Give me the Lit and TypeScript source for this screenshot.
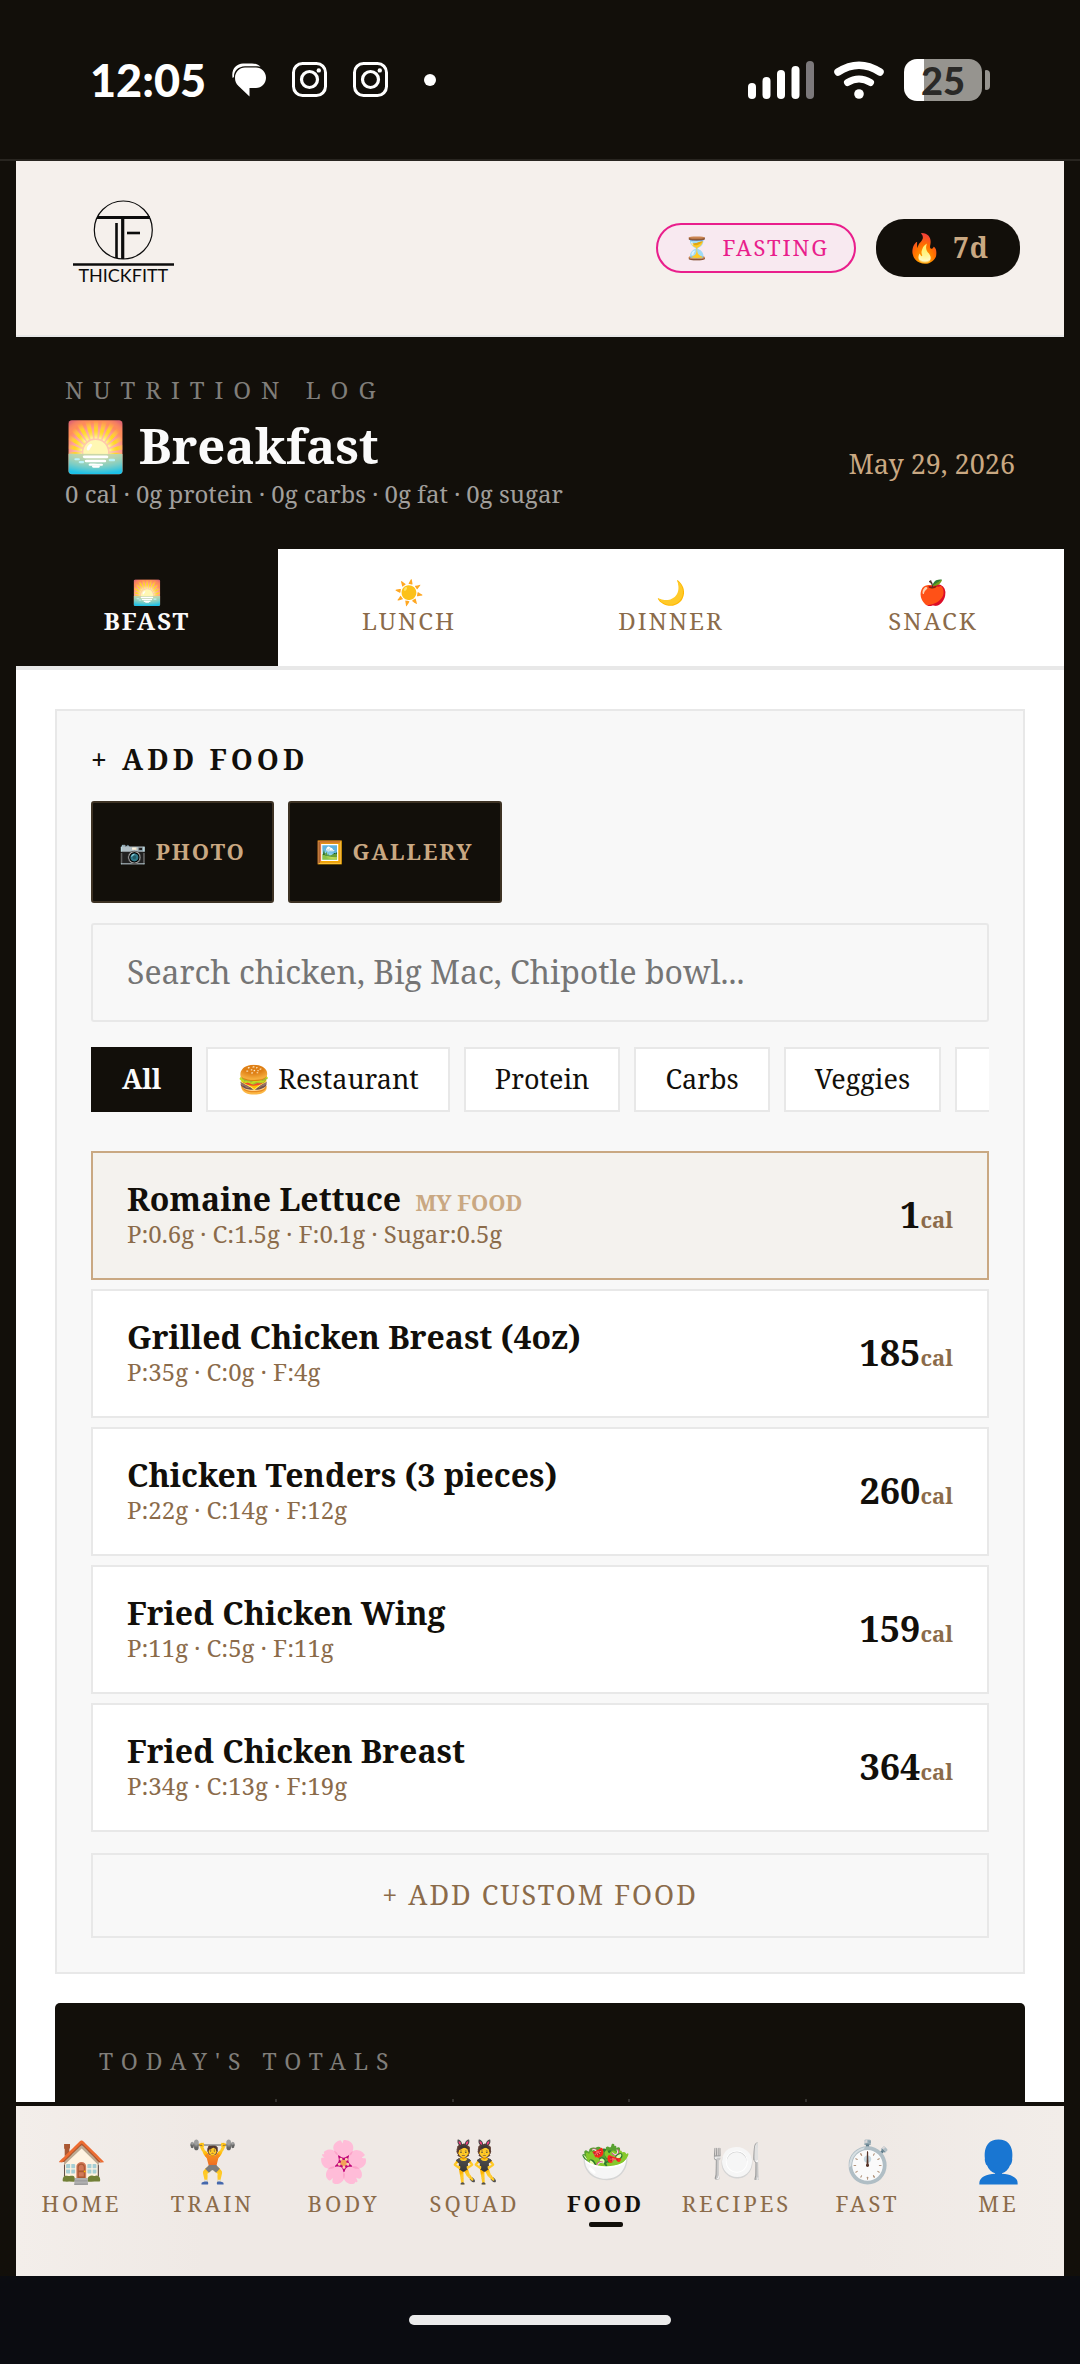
import { LitElement, html, css, nothing } from 'lit';
import { customElement, property, state } from 'lit/decorators.js';
import { classMap } from 'lit/directives/class-map.js';

interface Meal {
    id: string;
    icon: string;
    tab: string;
    title: string;
}

interface Food {
    name: string;
    macros: string;
    calories: number;
    mine?: boolean;
}

interface NavEntry {
    icon: string;
    label: string;
}

const MEALS: Meal[] = [
    { id: 'breakfast', icon: '🌅', tab: 'BFAST', title: 'Breakfast' },
    { id: 'lunch', icon: '☀️', tab: 'LUNCH', title: 'Lunch' },
    { id: 'dinner', icon: '🌙', tab: 'DINNER', title: 'Dinner' },
    { id: 'snack', icon: '🍎', tab: 'SNACK', title: 'Snack' },
];

const FILTERS = ['All', '🍔 Restaurant', 'Protein', 'Carbs', 'Veggies'];

const FOODS: Food[] = [
    { name: 'Romaine Lettuce', macros: 'P:0.6g · C:1.5g · F:0.1g · Sugar:0.5g', calories: 1, mine: true },
    { name: 'Grilled Chicken Breast (4oz)', macros: 'P:35g · C:0g · F:4g', calories: 185 },
    { name: 'Chicken Tenders (3 pieces)', macros: 'P:22g · C:14g · F:12g', calories: 260 },
    { name: 'Fried Chicken Wing', macros: 'P:11g · C:5g · F:11g', calories: 159 },
    { name: 'Fried Chicken Breast', macros: 'P:34g · C:13g · F:19g', calories: 364 },
];

const NAV: NavEntry[] = [
    { icon: '🏠', label: 'HOME' },
    { icon: '🏋️', label: 'TRAIN' },
    { icon: '🌸', label: 'BODY' },
    { icon: '👯', label: 'SQUAD' },
    { icon: '🥗', label: 'FOOD' },
    { icon: '🍽️', label: 'RECIPES' },
    { icon: '⏱️', label: 'FAST' },
    { icon: '👤', label: 'ME' },
];

@customElement('status-bar')
class StatusBar extends LitElement {
    static styles = css`
        :host {
            display: flex;
            align-items: center;
            justify-content: space-between;
            height: 159px;
            padding: 0 90px;
            border-bottom: 2px solid #282520;
            color: #fff;
            font-family: Lato, sans-serif;
            font-weight: 900;
        }

        .side {
            display: flex;
            align-items: center;
        }

        .left {
            gap: 26px;
        }

        .right {
            gap: 20px;
        }

        .time {
            font-size: 45px;
            line-height: 56px;
        }

        svg {
            display: block;
        }

        .dot {
            width: 12px;
            height: 12px;
            margin-left: 10px;
            border-radius: 50%;
            background: #fff;
        }

        .battery {
            display: flex;
            align-items: center;
            gap: 3px;
        }

        .cell {
            width: 78px;
            height: 42px;
            border-radius: 13px;
            background: linear-gradient(to right, #fff 25%, #96948f 25%);
            color: #2a2927;
            font-size: 38px;
            line-height: 42px;
            text-align: center;
        }

        .tip {
            width: 5px;
            height: 20px;
            border-radius: 1px 4px 4px 1px;
            background: #96948f;
        }
    `;

    #camera() {
        return html`<svg width="35" height="35" viewBox="0 0 35 35" fill="none" stroke="#fff" stroke-width="3">
            <rect x="1.5" y="1.5" width="32" height="32" rx="9" />
            <circle cx="17.5" cy="17.5" r="8" stroke-width="3.2" />
            <circle cx="26.8" cy="8.4" r="2.2" fill="#fff" stroke="none" />
        </svg>`;
    }

    render() {
        return html`
            <div class="side left">
                <span class="time">12:05</span>
                <svg width="34" height="34" viewBox="0 0 34 34" fill="#fff">
                    <path d="M0.6 15C-1 6 4 1 11 .4h9c4 0 7 1.6 8.5 3.4C26 3.2 24 3.2 20 3.2h-7C6 3.5 1.6 8 2 14z" />
                    <path d="M13 4.5h11c5.5 0 10 4.5 10 10.2S29.5 25 24 25h-6.500v8.600L6.500 23C4 20.800 3 18 3 14.700 3 9 7.500 4.500 13 4.500z" />
                </svg>
                ${this.#camera()} ${this.#camera()}
                <span class="dot"></span>
            </div>
            <div class="side right">
                <svg width="66" height="38" viewBox="0 0 66 38" fill="#fff">
                    <rect x="0" y="22" width="8" height="16" rx="4" />
                    <rect x="14.5" y="16" width="8" height="22" rx="4" />
                    <rect x="29" y="9" width="8" height="29" rx="4" />
                    <rect x="43.5" y="5" width="8" height="33" rx="4" />
                    <rect x="58" y="0" width="8" height="38" rx="4" fill="#7c797b" />
                </svg>
                <svg width="50" height="38" viewBox="0 0 50 38" fill="none" stroke="#fff" stroke-linecap="round">
                    <path d="M4 11Q25-2.5 46 11" stroke-width="7.5" />
                    <path d="M13.5 21.5Q25 14.5 36.5 21.5" stroke-width="7" />
                    <circle cx="25" cy="33" r="4.8" fill="#fff" stroke="none" />
                </svg>
                <div class="battery">
                    <div class="cell">25</div>
                    <div class="tip"></div>
                </div>
            </div>
        `;
    }
}

@customElement('brand-header')
class BrandHeader extends LitElement {
    static styles = css`
        :host {
            display: flex;
            align-items: center;
            justify-content: space-between;
            padding: 39px 44px 39px 50px;
            border-bottom: 2px solid #e8e8e8;
            background: #f5f0ec;
        }

        .logo {
            display: block;
            font-family: Lato, sans-serif;
            font-size: 18px;
        }

        .pills {
            display: flex;
            align-items: center;
            gap: 20px;
        }

        button {
            display: flex;
            align-items: center;
            font-family: inherit;
            cursor: pointer;
        }

        .fasting {
            gap: 10px;
            height: 50px;
            padding: 0 25px 2px;
            border: 2px solid #e91e8c;
            border-radius: 25px;
            background: #f8e9f0;
            color: #e91e8c;
            font-size: 22px;
            letter-spacing: 2px;
        }

        .streak {
            gap: 10px;
            height: 58px;
            padding: 0 31px 2px;
            border: 0;
            border-radius: 28px;
            background: #120f0a;
            color: #c9a882;
            font-size: 28px;
            font-weight: 700;
            letter-spacing: 1px;
        }
    `;

    render() {
        return html`
            <svg class="logo" width="115" height="96" viewBox="0 0 115 96" role="img" aria-label="Thickfitt">
                <g fill="none" stroke="#0c0c0c">
                    <circle cx="57.3" cy="30" r="29" stroke-width="1.2" />
                    <path d="M31 17.5h53" stroke-width="3" />
                    <path d="M56.7 17v42" stroke-width="3.2" />
                    <path d="M50.5 23v35" stroke-width="2.6" />
                    <path d="M61 33h13" stroke-width="2.6" />
                    <path d="M7 64.5h101" stroke-width="2.4" />
                </g>
                <text x="57.3" y="82" text-anchor="middle" fill="#0c0c0c">THICKFITT</text>
            </svg>
            <div class="pills">
                <button class="fasting"><span>⏳</span><span>FASTING</span></button>
                <button class="streak"><span>🔥</span><span>7d</span></button>
            </div>
        `;
    }
}

@customElement('food-row')
class FoodRow extends LitElement {
    @property({ attribute: false }) food!: Food;

    static styles = css`
        button {
            display: flex;
            align-items: center;
            justify-content: space-between;
            width: 100%;
            padding: 26px 34px 29px;
            border: 2px solid #e8e8e8;
            background: #fff;
            color: #120f0a;
            font-family: inherit;
            text-align: left;
            cursor: pointer;
        }

        .mine {
            border-color: #c9a882;
            background: #f4f2ee;
        }

        .info {
            display: flex;
            flex-direction: column;
        }

        .name {
            font-size: 32px;
            font-weight: 700;
            line-height: 40px;
        }

        .tag {
            margin-left: 6px;
            color: #c9a882;
            font-size: 22px;
            line-height: 22px;
        }

        .macros {
            color: #8b6b4a;
            font-size: 24px;
            line-height: 30px;
        }

        .calories {
            padding-top: 2px;
            font-size: 36px;
            font-weight: 700;
            line-height: 50px;
        }

        .unit {
            color: #8b6b4a;
            font-size: 22px;
            line-height: 22px;
        }
    `;

    render() {
        const { name, macros, calories, mine } = this.food;
        return html`
            <button class=${classMap({ mine: Boolean(mine) })}>
                <span class="info">
                    <span class="name">${name}${mine ? html` <span class="tag">MY FOOD</span>` : nothing}</span>
                    <span class="macros">${macros}</span>
                </span>
                <span class="calories">${calories}<span class="unit">cal</span></span>
            </button>
        `;
    }
}

@customElement('bottom-nav')
class BottomNav extends LitElement {
    @property() current = 'FOOD';

    static styles = css`
        nav {
            display: grid;
            grid-template-columns: repeat(8, 1fr);
            padding: 28px 0 49px;
            border-top: 4px solid #120f0a;
            background: linear-gradient(to right, #f3eeea, #efe9e5 18%, #efe9e5 80%, #f2ede9);
        }

        a {
            display: flex;
            flex-direction: column;
            align-items: center;
            color: #8b6b4a;
            font-size: 22px;
            line-height: 28px;
            letter-spacing: 3px;
            text-decoration: none;
        }

        .icon {
            margin-bottom: 3px;
            font-size: 41px;
            line-height: 52px;
            letter-spacing: 0;
        }

        a::after {
            content: '';
            width: 34px;
            height: 5px;
            margin-top: 5px;
            border-radius: 2px;
        }

        .active {
            color: #120f0a;
            font-weight: 700;
        }

        .active::after {
            background: #120f0a;
        }
    `;

    render() {
        return html`
            <nav>
                ${NAV.map(
                    ({ icon, label }) => html`
                        <a href="#${label.toLowerCase()}" class=${classMap({ active: label === this.current })}>
                            <span class="icon">${icon}</span>
                            <span>${label}</span>
                        </a>
                    `,
                )}
            </nav>
        `;
    }
}

@customElement('app-root')
class AppRoot extends LitElement {
    @state() meal = MEALS[0];
    @state() filter = 'All';

    static styles = css`
        :host {
            display: flex;
            flex-direction: column;
            height: 100vh;
            background: #120f0a;
            color: #120f0a;
            font-family: 'Noto Serif', 'Droid Serif', 'Liberation Serif', serif;
        }

        button,
        input {
            font-family: inherit;
        }

        button {
            cursor: pointer;
        }

        h1,
        h2,
        p,
        ul {
            margin: 0;
            padding: 0;
        }

        .app {
            display: flex;
            flex: 1;
            flex-direction: column;
            min-height: 0;
            margin: 0 16px;
            background: #fff;
        }

        .scroll {
            flex: 1;
            min-height: 0;
            overflow: hidden;
        }

        .hero {
            display: flex;
            align-items: flex-end;
            justify-content: space-between;
            padding: 37px 49px 39px;
            background: #120f0a;
        }

        .eyebrow {
            color: #807e7a;
            font-size: 24px;
            line-height: 32px;
            letter-spacing: 10px;
        }

        h1 {
            margin-top: 6px;
            color: #fafafa;
            font-size: 49px;
            font-weight: 700;
            line-height: 66px;
        }

        .summary {
            color: #a19f9c;
            font-size: 24px;
            line-height: 32px;
        }

        .date {
            padding-bottom: 28px;
            color: #c9a882;
            font-size: 27px;
            line-height: 36px;
        }

        .tabs {
            display: grid;
            grid-template-columns: repeat(4, 1fr);
            border-bottom: 4px solid #e8e8e8;
        }

        .tab {
            display: flex;
            flex-direction: column;
            align-items: center;
            padding: 28px 0 30px;
            border: 0;
            background: #fff;
            color: #8b6b4a;
            font-size: 24px;
            line-height: 30px;
            letter-spacing: 2px;
        }

        .tab.active {
            background: #120f0a;
            color: #fafafa;
            font-weight: 700;
        }

        .tab-icon {
            line-height: 29px;
            letter-spacing: 0;
        }

        .content {
            padding: 39px;
        }

        .panel {
            padding: 34px;
            border: 2px solid #e8e8e8;
            background: #f8f8f8;
        }

        h2 {
            font-size: 28px;
            font-weight: 700;
            line-height: 28px;
            letter-spacing: 4px;
        }

        .sources {
            display: flex;
            gap: 14px;
            margin-top: 28px;
        }

        .source {
            height: 102px;
            padding: 0 26px 2px;
            border: 2px solid #3d3224;
            border-radius: 3px;
            background: #120f0a;
            color: #c9a882;
            font-size: 22px;
            font-weight: 700;
            letter-spacing: 2px;
        }

        .search {
            display: block;
            box-sizing: border-box;
            width: 100%;
            height: 99px;
            margin-top: 20px;
            padding: 0 34px 2px;
            border: 2px solid #e8e8e8;
            border-radius: 3px;
            background: #f8f8f8;
            color: #120f0a;
            font-size: 32px;
        }

        .search::placeholder {
            color: #757575;
        }

        .filters {
            display: flex;
            gap: 14px;
            margin-top: 25px;
            overflow: hidden;
        }

        .filter {
            flex: none;
            height: 65px;
            padding: 0 29px 2px;
            border: 2px solid #e8e8e8;
            background: #fff;
            color: #120f0a;
            font-size: 27px;
        }

        .filter.active {
            border-color: #120f0a;
            background: #120f0a;
            color: #fafafa;
            font-weight: 700;
        }

        .filter.more {
            width: 120px;
        }

        .foods {
            display: flex;
            flex-direction: column;
            gap: 9px;
            margin-top: 39px;
            list-style: none;
        }

        .custom {
            width: 100%;
            height: 85px;
            margin-top: 21px;
            padding: 0 0 2px;
            border: 2px solid #e8e8e8;
            background: #f8f8f8;
            color: #8b6b4a;
            font-size: 27px;
            letter-spacing: 2px;
        }

        .totals {
            margin-top: 29px;
            padding: 42px 44px;
            border-radius: 5px;
            background: #120f0a;
        }

        .totals h2 {
            color: #807e7a;
            font-size: 23px;
            font-weight: 400;
            line-height: 32px;
            letter-spacing: 8px;
        }

        .grid {
            display: grid;
            grid-template-columns: repeat(5, 1fr);
            height: 120px;
            margin-top: 22px;
        }

        .stat + .stat {
            border-left: 2px solid #33312d;
        }

        .system {
            display: flex;
            align-items: center;
            justify-content: center;
            height: 88px;
            background: #0b0c11;
        }

        .handle {
            width: 262px;
            height: 10px;
            border-radius: 5px;
            background: #ebebeb;
        }
    `;

    #renderTab(meal: Meal) {
        const active = meal === this.meal;
        return html`
            <button
                class=${classMap({ tab: true, active })}
                role="tab"
                aria-selected=${active ? 'true' : 'false'}
                @click=${() => (this.meal = meal)}
            >
                <span class="tab-icon">${meal.icon}</span>
                <span>${meal.tab}</span>
            </button>
        `;
    }

    #renderFilter(name: string) {
        return html`
            <button
                class=${classMap({ filter: true, active: name === this.filter })}
                @click=${() => (this.filter = name)}
            >
                ${name}
            </button>
        `;
    }

    render() {
        return html`
            <status-bar></status-bar>
            <div class="app">
                <brand-header></brand-header>
                <main class="scroll">
                    <header class="hero">
                        <div>
                            <p class="eyebrow">NUTRITION LOG</p>
                            <h1>${this.meal.icon} ${this.meal.title}</h1>
                            <p class="summary">0 cal · 0g protein · 0g carbs · 0g fat · 0g sugar</p>
                        </div>
                        <time class="date" datetime="2026-05-29">May 29, 2026</time>
                    </header>
                    <div class="tabs" role="tablist">${MEALS.map((meal) => this.#renderTab(meal))}</div>
                    <div class="content">
                        <section class="panel">
                            <h2>+ ADD FOOD</h2>
                            <div class="sources">
                                <button class="source">📷 PHOTO</button>
                                <button class="source">🖼️ GALLERY</button>
                            </div>
                            <input
                                class="search"
                                type="search"
                                aria-label="Search foods"
                                placeholder="Search chicken, Big Mac, Chipotle bowl..."
                            />
                            <div class="filters">
                                ${FILTERS.map((name) => this.#renderFilter(name))}
                                <button class="filter more" aria-label="More filters"></button>
                            </div>
                            <ul class="foods">
                                ${FOODS.map((food) => html`<li><food-row .food=${food}></food-row></li>`)}
                            </ul>
                            <button class="custom">+ ADD CUSTOM FOOD</button>
                        </section>
                        <section class="totals">
                            <h2>TODAY'S TOTALS</h2>
                            <div class="grid">${[0, 1, 2, 3, 4].map(() => html`<div class="stat"></div>`)}</div>
                        </section>
                    </div>
                </main>
                <bottom-nav></bottom-nav>
            </div>
            <footer class="system"><div class="handle"></div></footer>
        `;
    }
}
